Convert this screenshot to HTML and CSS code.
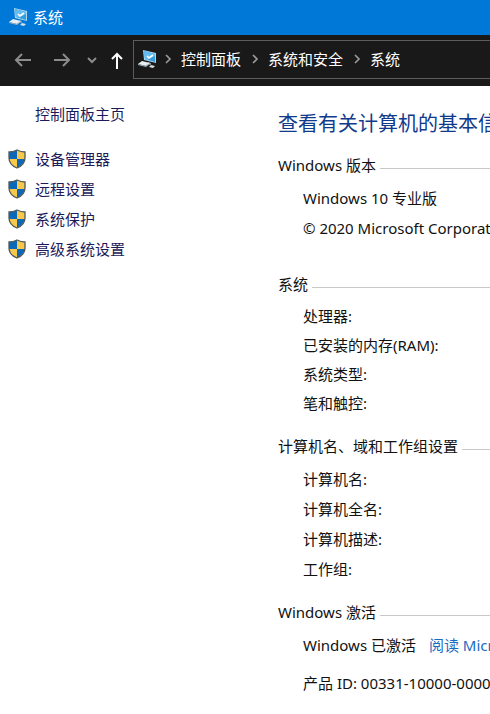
FILE: index.html
```html
<!DOCTYPE html>
<html lang="zh-CN">
<head>
    <meta charset="UTF-8">
    <meta name="viewport" content="width=device-width, initial-scale=1.0">
    <title>系统</title>
    <link rel="stylesheet" href="styles.css">
</head>
<body>
    <!-- shared icons -->
    <svg class="sprite" aria-hidden="true">
        <symbol id="computer" viewBox="0 0 20 20">
            <path d="M6 1l13 3v10L7 11z" fill="#a9d8f2"/>
            <path d="M7 2l11 3v8L8 10z" fill="#369bdd"/>
            <path d="M7 2l11 3v2L10 11l-2-1z" fill="#65bcf0"/>
            <path d="M10 7l2 2 4-3" fill="none" stroke="#fff" stroke-width="1.6"/>
            <path d="M11 13l3 1v2l-4-1z" fill="#8195a2"/>
            <path d="M5 12l8 2-4 3-8-2z" fill="#e8eff3"/>
            <path d="M1 15l8 2 4-3v1l-4 3-8-2z" fill="#a1aeb8"/>
            <path d="M14 16l4 1-2 2-4-1z" fill="#d5dfe5"/>
        </symbol>
        <symbol id="shield" viewBox="0 0 20 20">
            <path d="M10 1c2 1 5 2 8 2v6c0 4-3 8-8 10-5-2-8-6-8-10V3c3 0 6-1 8-2z" fill="#f8c84a"/>
            <path d="M10 1v9H2V3c3 0 6-1 8-2zM10 10h8c-1 4-4 7-8 9z" fill="#0b68b8"/>
            <path d="M10 1c2 1 5 2 8 2v6c0 4-3 8-8 10-5-2-8-6-8-10V3c3 0 6-1 8-2z" fill="none" stroke="#505a5c" stroke-width="1.3"/>
        </symbol>
        <symbol id="chevron" viewBox="0 0 8 12">
            <path d="M2 2l4 4-4 4" fill="none" stroke="currentColor" stroke-width="1.7"/>
        </symbol>
    </svg>

    <header class="titlebar">
        <svg class="icon"><use href="#computer"/></svg>
        <span>系统</span>
    </header>

    <div class="toolbar">
        <div class="nav-buttons">
            <button type="button" class="nav-btn" aria-label="后退">
                <svg viewBox="0 0 18 18"><path d="M17 9H2M8 3L2 9l6 6"/></svg>
            </button>
            <button type="button" class="nav-btn" aria-label="前进">
                <svg viewBox="0 0 18 18"><path d="M1 9h15M10 3l6 6-6 6"/></svg>
            </button>
            <button type="button" class="nav-btn nav-recent" aria-label="最近浏览的位置">
                <svg viewBox="0 0 18 18"><path d="M5 7l4 4 4-4"/></svg>
            </button>
            <button type="button" class="nav-btn nav-up" aria-label="向上">
                <svg viewBox="0 0 18 18"><path d="M9 18V3M4 8l5-5 5 5"/></svg>
            </button>
        </div>
        <nav class="breadcrumb">
            <svg class="icon"><use href="#computer"/></svg>
            <svg class="chevron first"><use href="#chevron"/></svg>
            <a href="#">控制面板</a>
            <svg class="chevron"><use href="#chevron"/></svg>
            <a href="#">系统和安全</a>
            <svg class="chevron"><use href="#chevron"/></svg>
            <a href="#">系统</a>
        </nav>
    </div>

    <div class="page">
        <aside class="sidebar">
            <a href="#" class="home">控制面板主页</a>
            <ul>
                <li><svg class="icon"><use href="#shield"/></svg><a href="#">设备管理器</a></li>
                <li><svg class="icon"><use href="#shield"/></svg><a href="#">远程设置</a></li>
                <li><svg class="icon"><use href="#shield"/></svg><a href="#">系统保护</a></li>
                <li><svg class="icon"><use href="#shield"/></svg><a href="#">高级系统设置</a></li>
            </ul>
        </aside>

        <main>
            <h1>查看有关计算机的基本信息</h1>

            <section class="edition">
                <h2>Windows 版本</h2>
                <p>Windows 10 专业版</p>
                <p>© 2020 Microsoft Corporation。保留所有权利。</p>
            </section>

            <section class="system">
                <h2>系统</h2>
                <p>处理器:</p>
                <p>已安装的内存(RAM):</p>
                <p>系统类型:</p>
                <p>笔和触控:</p>
            </section>

            <section>
                <h2>计算机名、域和工作组设置</h2>
                <p>计算机名:</p>
                <p>计算机全名:</p>
                <p>计算机描述:</p>
                <p>工作组:</p>
            </section>

            <section class="activation">
                <h2>Windows 激活</h2>
                <p>Windows 已激活<a href="#">阅读 Microsoft 软件许可条款</a></p>
                <p>产品 ID: 00331-10000-00001-AA000</p>
            </section>
        </main>
    </div>
</body>
</html>
```

FILE: styles.css
```css
* {
    margin: 0;
    padding: 0;
    box-sizing: border-box;
}

body {
    background: #fff;
    color: #111;
    font-family: 'Noto Sans', 'Noto Sans CJK SC', sans-serif;
    font-size: 15px;
    line-height: 30px;
    overflow-x: hidden;
}

a {
    color: inherit;
    text-decoration: none;
}

ul {
    list-style: none;
}

.sprite {
    display: none;
}

.icon {
    width: 20px;
    height: 20px;
    flex: none;
}

.titlebar {
    display: flex;
    align-items: center;
    gap: 5px;
    height: 35px;
    padding: 0 0 2px 8px;
    background: #0078d7;
    color: #fff;
}

.toolbar {
    display: flex;
    height: 51px;
    padding: 5px 0 7px;
    background: #191919;
    color: #fff;
}

.nav-buttons {
    display: flex;
    align-items: center;
    padding-left: 14px;
    width: 133px;
    flex: none;
}

.nav-btn {
    display: flex;
    width: 18px;
    height: 18px;
    margin-right: 21px;
    background: none;
    border: none;
    color: #8c8c8c;
    cursor: pointer;
}

.nav-btn svg {
    width: 18px;
    height: 18px;
    fill: none;
    stroke: currentColor;
    stroke-width: 2;
}

.nav-btn.nav-recent {
    margin: 0 7px 0 -9px;
}

.nav-btn.nav-up {
    margin-right: 0;
    color: #fff;
}

.breadcrumb {
    display: flex;
    align-items: center;
    flex: 1;
    min-width: 0;
    padding: 0 0 2px 3px;
    border: 1px solid #5c5c5c;
    border-right: none;
    white-space: nowrap;
}

.chevron {
    width: 8px;
    height: 12px;
    margin: 0 9px 0 10px;
    flex: none;
    color: #999;
}

.chevron.first {
    margin-left: 7px;
}

.page {
    display: flex;
}

.sidebar {
    width: 278px;
    flex: none;
    padding: 13px 0 0 7px;
    color: #1b1b5a;
}

.sidebar .home {
    display: block;
    padding-left: 28px;
    margin-bottom: 15px;
}

.sidebar li {
    display: flex;
    align-items: center;
    gap: 8px;
}

main {
    flex: 1;
    min-width: 0;
    padding: 23px 0 16px;
    white-space: nowrap;
    overflow: hidden;
}

h1 {
    margin-bottom: 14px;
    font-size: 20px;
    font-weight: 400;
    color: #103a8c;
}

h2 {
    display: flex;
    align-items: center;
    gap: 4px;
    height: 24px;
    margin-bottom: 6px;
    font-size: 15px;
    font-weight: 400;
}

h2::after {
    content: '';
    flex: 1;
    margin-top: 6px;
    border-top: 1px solid #c8c8c8;
}

section {
    margin-bottom: 16px;
}

section p {
    padding-left: 25px;
}

.edition {
    margin-bottom: 29px;
}

.system p {
    line-height: 29px;
}

.activation p {
    margin-bottom: 8px;
}

.activation a {
    margin-left: 13px;
    color: #1a6bc4;
}
```
